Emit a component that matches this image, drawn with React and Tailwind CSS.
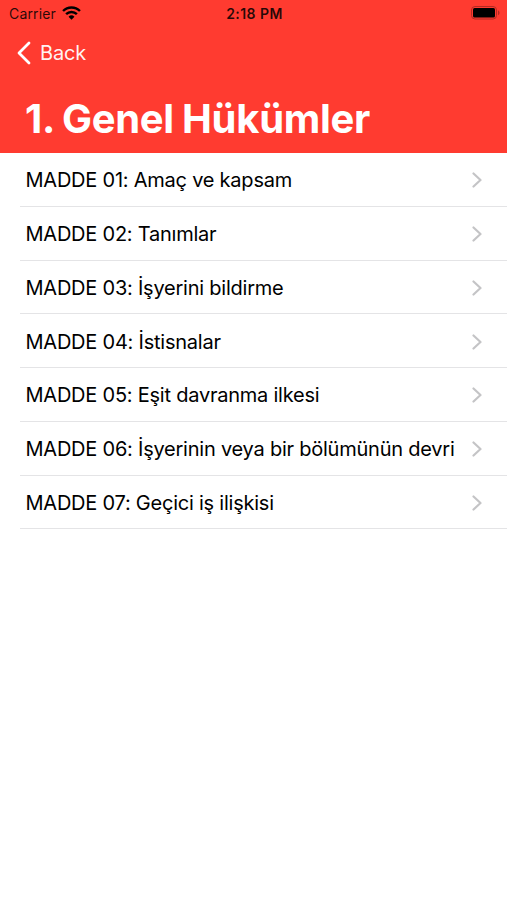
import React from 'react';

const articles = [
  { id: 1, title: 'MADDE 01: Amaç ve kapsam' },
  { id: 2, title: 'MADDE 02: Tanımlar' },
  { id: 3, title: 'MADDE 03: İşyerini bildirme' },
  { id: 4, title: 'MADDE 04: İstisnalar' },
  { id: 5, title: 'MADDE 05: Eşit davranma ilkesi' },
  { id: 6, title: 'MADDE 06: İşyerinin veya bir bölümünün devri' },
  { id: 7, title: 'MADDE 07: Geçici iş ilişkisi' },
];

const App = () => {
  return (
    <div className="w-full h-[900px] bg-white text-black font-['Inter',sans-serif] overflow-hidden">
      <header className="h-[153px] bg-[#ff3b30] flex flex-col">
        {/* Status bar */}
        <div className="h-[27px] shrink-0 grid grid-cols-3 items-center pl-[9px] pr-[7px] text-[14px]">
          <div className="flex items-center gap-[6px]">
            <span className="tracking-[0.15px] text-black/85">Carrier</span>
            <svg className="w-[19px] h-[14px] -mt-[2px]" viewBox="0 0 18 13" fill="none" stroke="black" strokeWidth="2.3">
              <path d="M1 4.6a11.3 11.3 0 0 1 16 0" />
              <path d="M3.900 7.6a7.2 7.2 0 0 1 10.2 0" />
              <path d="M9 13 6.2 10.1a4 4 0 0 1 5.6 0Z" fill="black" stroke="none" />
            </svg>
          </div>
          <span className="text-center font-semibold tracking-[0.45px] text-black/85">2:18 PM</span>
          <svg className="w-[29px] h-[14px] justify-self-end -mt-px" viewBox="0 0 29 14" fill="none">
            <rect x="0.5" y="0.5" width="25" height="12.5" rx="3.5" stroke="#b32a22" />
            <rect x="2" y="2" width="22" height="9.5" rx="1.5" fill="black" />
            <path d="M27 4.5c2 .7 2 4 0 4.700Z" fill="#b32a22" />
          </svg>
        </div>

        <button className="h-[51px] shrink-0 flex items-center pl-[17px] text-white/95 text-[20px] tracking-[-0.2px]">
          <svg className="w-[14px] h-[24px] mr-[9px]" viewBox="0 0 14 24" fill="none" stroke="white" strokeWidth="2.8" strokeLinecap="round" strokeLinejoin="round">
            <path d="M12 2 2 12l10 10" />
          </svg>
          Back
        </button>

        <h1 className="pl-[25px] pt-[16px] text-white text-[40px] leading-[50px] font-bold tracking-[-0.3px] [word-spacing:-1px] whitespace-nowrap">
          1. Genel Hükümler
        </h1>
      </header>

      {/* Article list */}
      <ul className="pl-[20px]">
        {articles.map(article => (
          <li
            key={article.id}
            className="h-[53.75px] flex items-center justify-between pl-[5.5px] pr-[25px] pt-[2px] border-b border-[#e4e4e6]"
          >
            <span className="text-[20px] tracking-[-0.23px] whitespace-nowrap">{article.title}</span>
            <svg className="w-[10px] h-[16px] shrink-0" viewBox="0 0 10 16" fill="none" stroke="#c4c4c6" strokeWidth="2.2" strokeLinecap="round" strokeLinejoin="round">
              <path d="m1.500 1.500 7 6.500-7 6.500" />
            </svg>
          </li>
        ))}
      </ul>
    </div>
  );
};

export default App;
